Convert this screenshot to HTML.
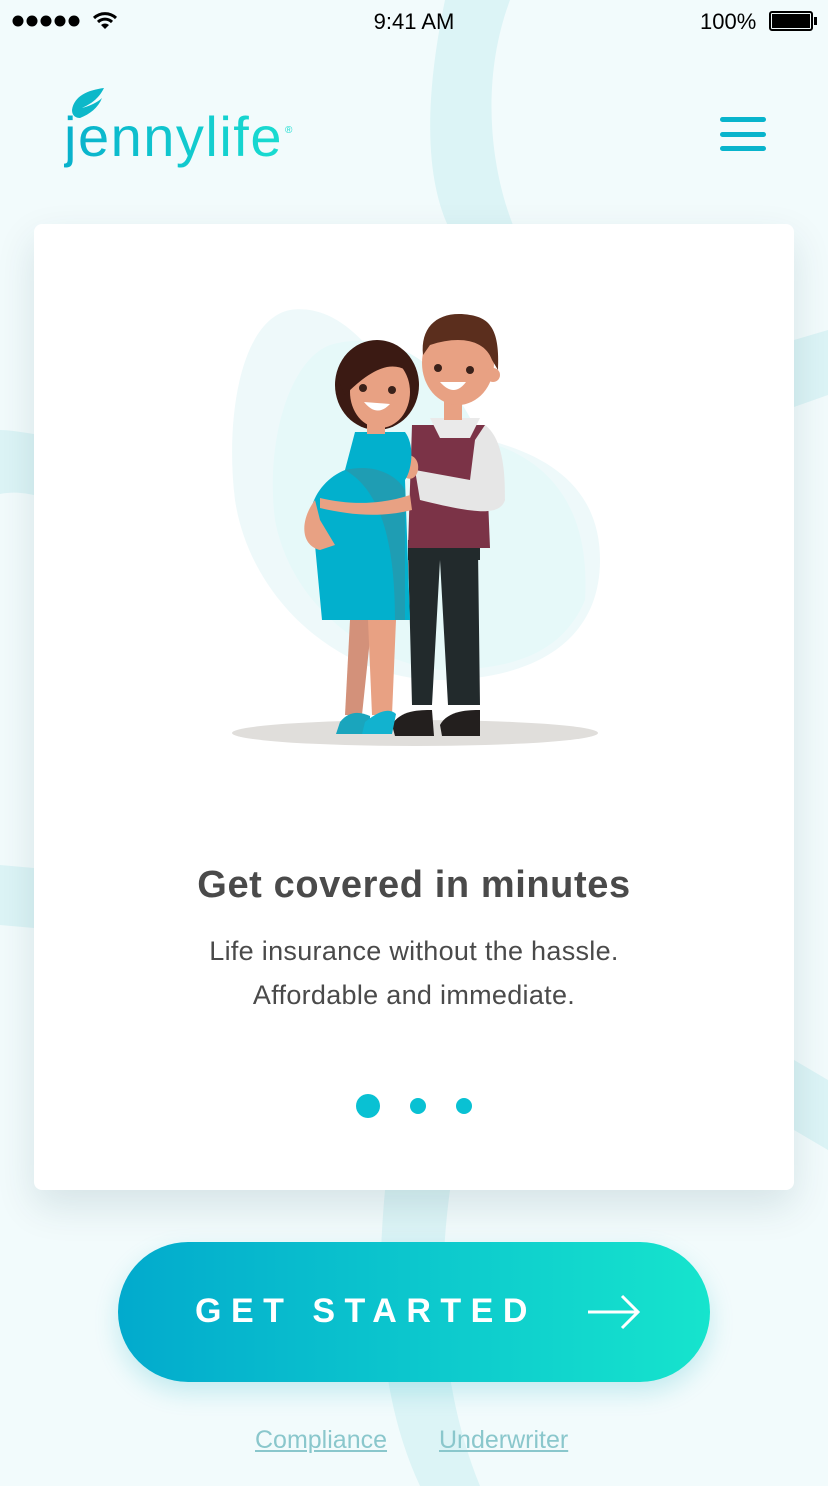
<!DOCTYPE html>
<html><head><meta charset="utf-8"><style>
*{margin:0;padding:0;box-sizing:border-box}
body{width:828px;height:1486px;overflow:hidden;background:#f2fbfc;font-family:"Liberation Sans",sans-serif;position:relative}
.abs{position:absolute}
</style></head><body>
<svg class="abs" style="left:0;top:0" width="828" height="1486">
<path d="M445 0 C420 120 430 190 450 230 L515 230 C490 170 480 80 510 0 Z" fill="#dcf4f6"/>
<path d="M0 430 C10 430 20 432 34 434 L34 495 C20 492 10 492 0 494Z" fill="#dcf4f6"/>
<path d="M0 865 L34 868 L34 928 L0 925Z" fill="#dcf4f6"/>
<path d="M794 340 L828 330 L828 395 L794 407Z" fill="#dcf4f6"/>
<path d="M794 1060 L828 1080 L828 1150 L794 1130Z" fill="#dcf4f6"/>
<path d="M385 1190 C375 1300 380 1400 420 1486 L480 1486 C445 1400 435 1300 450 1190Z" fill="#dcf4f6"/>
</svg>
<!-- status bar -->
<svg class="abs" style="left:12px;top:14px" width="70" height="14"><g fill="#000"><circle cx="6" cy="7" r="5.5"/><circle cx="20" cy="7" r="5.5"/><circle cx="34" cy="7" r="5.5"/><circle cx="48" cy="7" r="5.5"/><circle cx="62" cy="7" r="5.5"/></g></svg>
<svg class="abs" style="left:92px;top:10px" width="26" height="22" viewBox="0 0 26 22"><path d="M2 8 A16 16 0 0 1 24 8" stroke="#000" stroke-width="3" fill="none"/><path d="M6 12 A10 10 0 0 1 20 12" stroke="#000" stroke-width="3" fill="none"/><path d="M13 19 L9 15 A6 6 0 0 1 17 15Z" fill="#000"/></svg>
<div class="abs" style="left:0;width:828px;text-align:center;top:9px;font-size:22px">9:41 AM</div>
<div class="abs" style="left:700px;top:9px;font-size:22px">100%</div>
<div class="abs" style="left:769px;top:11px;width:44px;height:20px;border:2px solid #000;border-radius:3px;padding:1px"><div style="background:#000;width:100%;height:100%"></div></div>
<div class="abs" style="left:814px;top:17px;width:3px;height:8px;background:#000"></div>
<!-- logo -->
<svg class="abs" style="left:68px;top:86px" width="40" height="36" viewBox="0 0 40 36"><path d="M36 2 C20 4 6 10 4 24 C4 30 8 32 12 32 C22 28 30 22 34 12 C30 16 22 20 14 22 C22 18 30 14 36 2Z" fill="#0db8c9"/></svg>
<div class="abs" style="left:64px;top:104px;font-size:56px;letter-spacing:1.5px;background:linear-gradient(90deg,#08b1cc,#19dcd0);-webkit-background-clip:text;color:transparent;font-weight:normal">jennylife</div>
<div class="abs" style="left:285px;top:125px;font-size:10px;color:#19dcd0">®</div>
<!-- hamburger -->
<div class="abs" style="left:720px;top:117px;width:46px;height:5px;border-radius:3px;background:#08b4cc"></div>
<div class="abs" style="left:720px;top:132px;width:46px;height:5px;border-radius:3px;background:#08b4cc"></div>
<div class="abs" style="left:720px;top:146px;width:46px;height:5px;border-radius:3px;background:#08b4cc"></div>
<!-- card -->
<div class="abs" style="left:34px;top:224px;width:760px;height:966px;background:#fff;border-radius:8px;box-shadow:0 16px 40px rgba(0,60,70,0.12)"></div>
<svg class="abs" style="left:0;top:0" width="828" height="800">
<path d="M290 310 C360 300 400 400 430 430 C520 440 600 470 600 560 C600 650 520 680 440 680 C340 680 250 600 235 500 C225 420 240 320 290 310Z" fill="#eef9fa"/>
<path d="M330 345 C420 320 470 410 480 440 C560 460 590 520 585 600 C560 660 500 670 440 670 C360 660 290 600 275 520 C265 440 290 360 330 345Z" fill="#e6f9f9"/>
<ellipse cx="415" cy="733" rx="183" ry="13" fill="#e0dedb"/>
<!-- man -->
<rect x="408" y="540" width="72" height="20" fill="#222a2c"/>
<path d="M408 550 L412 705 L432 705 L440 560 L448 705 L480 705 L478 550Z" fill="#222a2c"/>
<path d="M392 725 C400 710 420 710 432 710 L434 736 L395 736Z" fill="#231f1e"/>
<path d="M440 725 C448 710 470 710 480 710 L480 736 L442 736Z" fill="#231f1e"/>
<path d="M412 425 L485 425 L490 548 L408 548Z" fill="#7b3347"/>
<path d="M430 418 L480 418 L470 438 L440 438Z" fill="#eaeaea"/>
<path d="M485 425 C505 440 505 480 505 500 C500 515 480 515 420 500 L415 470 L470 480 L475 440Z" fill="#e6e6e6"/>
<path d="M396 460 C405 450 420 455 418 470 C415 485 398 480 396 460Z" fill="#e8a183"/>
<rect x="444" y="395" width="18" height="25" fill="#e8a183"/>
<ellipse cx="458" cy="363" rx="36" ry="42" fill="#e8a183"/>
<circle cx="493" cy="375" r="7" fill="#e8a183"/>
<path d="M423 355 C420 325 440 310 470 315 C490 318 500 330 498 370 L492 360 C485 340 460 335 430 345Z" fill="#5b2e1d"/>
<circle cx="438" cy="368" r="4" fill="#3a211a"/><circle cx="470" cy="370" r="4" fill="#3a211a"/>
<path d="M440 382 Q454 398 466 382Z" fill="#fff"/>
<!-- woman -->
<path d="M350 620 L345 715 L362 715 L372 620Z" fill="#d3917a"/>
<path d="M368 620 L372 715 L392 715 L396 620Z" fill="#e8a183"/>
<path d="M340 722 C350 710 360 712 370 716 L370 734 L336 734Z" fill="#1aa5bd"/>
<path d="M365 722 C380 710 390 708 396 714 L392 734 L362 734Z" fill="#12b2cf"/>
<path d="M355 432 L405 432 C415 445 412 470 405 480 L410 620 L322 620 L315 545 C300 510 320 480 345 470 Z" fill="#02b0cd"/>
<path d="M345 470 C380 462 400 480 405 490 L405 620 L395 620 C395 540 380 490 345 470Z" fill="#1f9db3"/>
<path d="M315 500 C300 520 300 545 320 550 L335 545 L320 520Z" fill="#e8a183"/>
<path d="M320 498 C350 505 380 505 410 495 L412 510 C380 518 350 515 320 508Z" fill="#e8a183"/>
<ellipse cx="377" cy="385" rx="42" ry="45" fill="#3b1a13"/>
<ellipse cx="380" cy="392" rx="30" ry="36" fill="#e8a183"/>
<path d="M338 380 C340 350 360 340 378 342 C400 345 415 360 418 380 C400 360 380 360 345 395Z" fill="#3b1a13"/>
<rect x="367" y="420" width="18" height="14" fill="#e8a183"/>
<circle cx="363" cy="388" r="4" fill="#3a211a"/><circle cx="392" cy="390" r="4" fill="#3a211a"/>
<path d="M364 402 Q377 418 390 404Z" fill="#fff"/>
</svg>
<div class="abs" style="left:34px;width:760px;top:864px;text-align:center;font-size:38px;font-weight:bold;color:#4a4a4a;letter-spacing:0.6px">Get covered in minutes</div>
<div class="abs" style="left:34px;width:760px;top:929px;text-align:center;font-size:27px;line-height:44px;color:#4a4a4a;letter-spacing:0.3px">Life insurance without the hassle.<br>Affordable and immediate.</div>
<div class="abs" style="left:356px;top:1094px;width:24px;height:24px;border-radius:50%;background:#09c1d3"></div>
<div class="abs" style="left:410px;top:1098px;width:16px;height:16px;border-radius:50%;background:#09c1d3"></div>
<div class="abs" style="left:456px;top:1098px;width:16px;height:16px;border-radius:50%;background:#09c1d3"></div>
<!-- button -->
<div class="abs" style="left:118px;top:1242px;width:592px;height:140px;border-radius:70px;background:linear-gradient(90deg,#02aacd,#16e4cd);box-shadow:0 10px 25px rgba(0,170,190,0.2)"></div>
<div class="abs" style="left:195px;top:1292px;font-size:34px;font-weight:bold;color:#fff;letter-spacing:9.5px">GET STARTED</div>
<svg class="abs" style="left:586px;top:1292px" width="56" height="40" viewBox="0 0 56 40"><path d="M2 20 H52 M36 4 L52 20 L36 36" stroke="#fff" stroke-width="3" fill="none"/></svg>
<div class="abs" style="left:255px;top:1426px;font-size:25px;color:#8ac7cc;text-decoration:underline">Compliance</div>
<div class="abs" style="left:439px;top:1426px;font-size:25px;color:#8ac7cc;text-decoration:underline">Underwriter</div>
</body></html>
